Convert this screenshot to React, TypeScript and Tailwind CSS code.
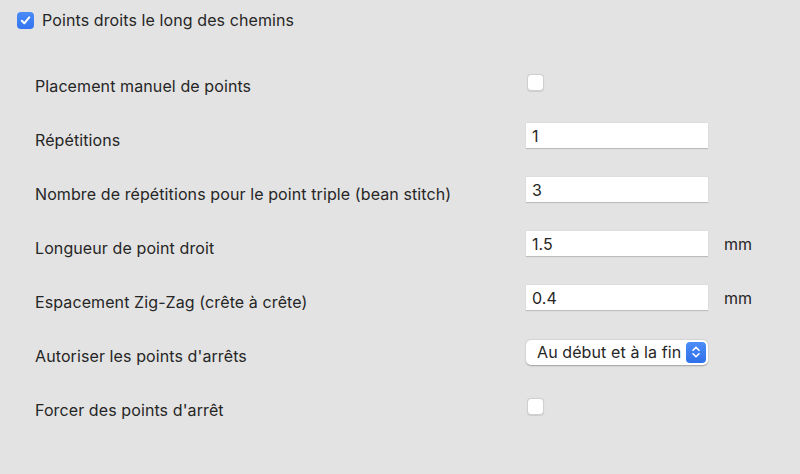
const rows: {
  label: string
  kind: "check" | "input" | "select"
  value?: string
  unit?: string
}[] = [
  { label: "Placement manuel de points", kind: "check" },
  { label: "Répétitions", kind: "input", value: "1" },
  { label: "Nombre de répétitions pour le point triple (bean stitch)", kind: "input", value: "3" },
  { label: "Longueur de point droit", kind: "input", value: "1.5", unit: "mm" },
  { label: "Espacement Zig-Zag (crête à crête)", kind: "input", value: "0.4", unit: "mm" },
  { label: "Autoriser les points d'arrêts", kind: "select", value: "Au début et à la fin" },
  { label: "Forcer des points d'arrêt", kind: "check" },
]

const Control = ({ row }: { row: (typeof rows)[number] }) => {
  if (row.kind === "check") {
    return (
      <div className="ml-[1px] w-[17px] h-[17px] rounded-[4px] bg-white border border-[#cfcfcf] shadow-[0_0.5px_1px_rgba(0,0,0,0.1)]" />
    )
  }
  if (row.kind === "select") {
    return (
      <div className="w-[182px] h-[25px] rounded-[5px] bg-white shadow-[0_0.5px_1.5px_rgba(0,0,0,0.3)] flex items-center justify-between pl-[11px] pr-[2px]">
        <span>{row.value}</span>
        <div className="w-[20px] h-[21px] rounded-[4px] bg-gradient-to-b from-[#4d8ef8] to-[#2f6fe9] flex items-center justify-center">
          <svg width="10" height="14" viewBox="0 0 10 14" fill="none" stroke="white" strokeWidth="1.6" strokeLinecap="round" strokeLinejoin="round">
            <path d="M2 5.2 L5 2.2 L8 5.2" />
            <path d="M2 8.8 L5 11.8 L8 8.8" />
          </svg>
        </div>
      </div>
    )
  }
  return (
    <div className="flex items-center">
      <div className="w-[182px] h-[26px] bg-white border-b border-[#bdbdbd] shadow-[0_0_1px_rgba(0,0,0,0.15)] flex items-center pl-[6px]">
        {row.value}
      </div>
      {row.unit && <span className="ml-[16px]">{row.unit}</span>}
    </div>
  )
}

export default function App() {
  return (
    <div
      className="w-[800px] h-[474px] bg-[#e3e3e3] text-[#262626] text-[16px] tracking-[0.1px] overflow-hidden"
      style={{ fontFamily: 'Inter, "Liberation Sans", Arial, sans-serif' }}
    >
      <div className="h-[55px] pt-[12px] pl-[17px] flex items-start gap-[8px]">
        <div className="w-[17px] h-[17px] rounded-[4px] bg-gradient-to-b from-[#4b8bf8] to-[#3474f0] flex items-center justify-center">
          <svg width="11" height="11" viewBox="0 0 11 11" fill="none" stroke="white" strokeWidth="2" strokeLinecap="round" strokeLinejoin="round">
            <path d="M1.8 5.8 L4.3 8.3 L9.2 2.3" />
          </svg>
        </div>
        <span className="leading-[17px]">Points droits le long des chemins</span>
      </div>
      <div className="flex flex-col">
        {rows.map((row) => (
          <div key={row.label} className="h-[54px] flex items-center">
            <div className="w-[526px] shrink-0 pl-[35px] pt-[8px]">{row.label}</div>
            <Control row={row} />
          </div>
        ))}
      </div>
    </div>
  )
}
